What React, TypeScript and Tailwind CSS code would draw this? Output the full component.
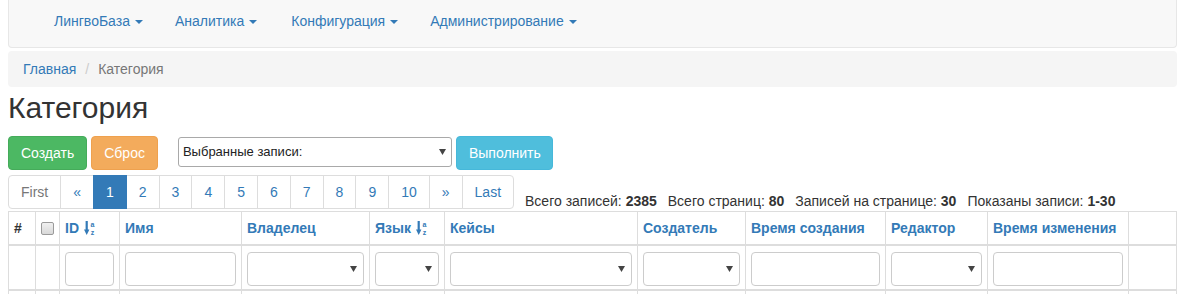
import React from "react";

const NAV = ["ЛингвоБаза", "Аналитика", "Конфигурация", "Администрирование"];
const PAGES = ["First", "«", "1", "2", "3", "4", "5", "6", "7", "8", "9", "10", "»", "Last"];
const GRID =
  "grid grid-cols-[27px_24px_60px_122px_128px_75px_193px_108px_140px_102px_141px_49px]";

type Col = { title?: string; sort?: boolean; filter?: "input" | "select"; kind?: "hash" | "check" };

const COLS: Col[] = [
  { kind: "hash" },
  { kind: "check" },
  { title: "ID", sort: true, filter: "input" },
  { title: "Имя", filter: "input" },
  { title: "Владелец", filter: "select" },
  { title: "Язык", sort: true, filter: "select" },
  { title: "Кейсы", filter: "select" },
  { title: "Создатель", filter: "select" },
  { title: "Время создания", filter: "input" },
  { title: "Редактор", filter: "select" },
  { title: "Время изменения", filter: "input" },
  {},
];

function Caret() {
  return (
    <span className="inline-block w-0 h-0 ml-[5px] align-middle border-t-[4px] border-t-[#337ab7] border-x-[4px] border-x-transparent" />
  );
}

function Arrow() {
  return (
    <svg width="7" height="6" viewBox="0 0 7 6" className="shrink-0">
      <path d="M0 0h7L3.5 6z" fill="#444" />
    </svg>
  );
}

function SortIcon() {
  return (
    <svg width="13" height="17" viewBox="0 0 13 17" className="ml-[5px]">
      <rect x="1.6" y="1" width="2.2" height="10" fill="#337ab7" />
      <path d="M0 9.5h5.4L2.7 15z" fill="#337ab7" />
      <text x="6.5" y="6.5" fontSize="7" fontWeight="bold" fill="#337ab7" fontFamily="Liberation Sans, Arial, sans-serif">
        a
      </text>
      <text x="6.8" y="14.5" fontSize="7" fontWeight="bold" fill="#337ab7" fontFamily="Liberation Sans, Arial, sans-serif">
        z
      </text>
    </svg>
  );
}

function Stat({ label, value, first }: { label: string; value: string; first?: boolean }) {
  return (
    <span className={first ? "" : "ml-[11px]"}>
      {label} <b>{value}</b>
    </span>
  );
}

export default function App() {
  return (
    <div className="font-['Liberation_Sans',Arial,sans-serif] text-[14px] text-[#333] bg-white pl-[8px] pr-[13px]">
      {/* navbar */}
      <div className="h-[48px] pb-[4px] bg-[#f8f8f8] border border-t-0 border-[#e7e7e7] rounded-b-[4px] flex items-center pl-[45px] text-[#337ab7]">
        {NAV.map((n, i) => (
          <span key={n} className={`flex items-center ${i === 0 ? "" : i === 2 ? "ml-[34px]" : "ml-[32px]"}`}>
            {n}
            <Caret />
          </span>
        ))}
      </div>

      {/* breadcrumb */}
      <div className="mt-[3px] h-[36px] bg-[#f5f5f5] rounded-[4px] flex items-center pl-[15px]">
        <span className="text-[#337ab7]">Главная</span>
        <span className="text-[#ccc] ml-[9px] mr-[9px]">/</span>
        <span className="text-[#777]">Категория</span>
      </div>

      <h1 className="mt-[4px] h-[33px] leading-[33px] text-[30px] font-normal text-[#333]">Категория</h1>

      {/* actions */}
      <div className="mt-[12px] flex items-start h-[34px]">
        <button className="h-[34px] px-[12px] rounded-[4px] bg-[#4cb863] border border-[#45ab5a] text-white">
          Создать
        </button>
        <button className="ml-[4px] h-[34px] px-[12px] rounded-[4px] bg-[#f3ab5c] border border-[#efa14e] text-white">
          Сброс
        </button>
        <div className="ml-[20px] mt-[1px] w-[274px] h-[30px] border border-[#a9a9a9] rounded-[3px] flex items-center justify-between pl-[4px] pr-[5px] text-[13px] text-[#222] bg-white">
          <span>Выбранные записи:</span>
          <Arrow />
        </div>
        <button className="ml-[4px] h-[34px] pl-[12px] pr-[11px] rounded-[4px] bg-[#4fbedc] border border-[#46b8da] text-white">
          Выполнить
        </button>
      </div>

      {/* pagination + stats */}
      <div className="mt-[5px] flex items-end">
        <div className="flex pl-px">
          {PAGES.map((p, i) => {
            const active = p === "1";
            const round = i === 0 ? "rounded-l-[4px]" : i === PAGES.length - 1 ? "rounded-r-[4px]" : "";
            const color = active ? "bg-[#337ab7] border-[#337ab7] text-white relative z-10" : p === "First" ? "bg-white border-[#ddd] text-[#777]" : "bg-white border-[#ddd] text-[#337ab7]";
            return (
              <span key={p} className={`-ml-px h-[34px] px-[12px] border flex items-center leading-[20px] ${round} ${color}`}>
                {p}
              </span>
            );
          })}
        </div>
        <div className="ml-[11px] text-[14px] leading-[16px] text-[#333]">
          <Stat first label="Всего записей:" value="2385" />
          <Stat label="Всего страниц:" value="80" />
          <Stat label="Записей на странице:" value="30" />
          <Stat label="Показаны записи:" value="1-30" />
        </div>
      </div>

      {/* table */}
      <div className={`mt-[2px] ${GRID} border-t border-r border-[#ddd]`}>
        {COLS.map((c, i) => (
          <div key={"h" + i} className="h-[34px] border-l border-b-2 border-[#ddd] px-[5px] flex items-center font-bold text-[#337ab7] overflow-hidden whitespace-nowrap">
            {c.kind === "hash" && <span className="text-[#333]">#</span>}
            {c.kind === "check" && (
              <span className="w-[13px] h-[13px] rounded-[2px] border border-[#9a9a9a] bg-gradient-to-b from-[#f0f0f0] to-[#d8d8d8]" />
            )}
            {c.title}
            {c.sort && <SortIcon />}
          </div>
        ))}
        {COLS.map((c, i) => (
          <div key={"f" + i} className="h-[45px] border-l border-b-2 border-[#ddd] px-[5px] pt-[6px]">
            {c.filter === "input" && <div className="h-[34px] border border-[#ccc] rounded-[4px] bg-white" />}
            {c.filter === "select" && (
              <div className="h-[34px] border border-[#ccc] rounded-[4px] bg-white flex items-center justify-end pr-[6px]">
                <Arrow />
              </div>
            )}
          </div>
        ))}
        {COLS.map((_, i) => (
          <div key={"r" + i} className="h-[36px] border-l border-[#ddd]" />
        ))}
      </div>
    </div>
  );
}
